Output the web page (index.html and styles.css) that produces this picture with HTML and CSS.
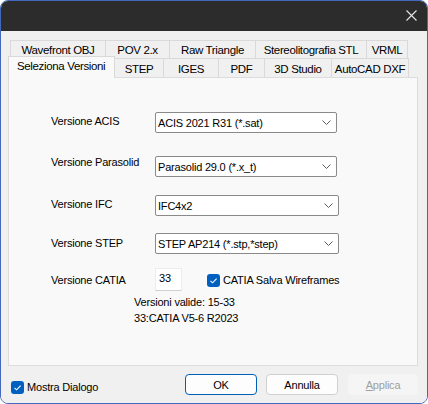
FILE: index.html
```html
<!DOCTYPE html>
<html>
<head>
<meta charset="utf-8">
<link rel="stylesheet" href="styles.css">
</head>
<body>
<div class="window">
  <div class="titlebar">
    <svg class="close" width="11" height="11" viewBox="0 0 11 11"><path d="M0.5 0.5 L10.5 10.5 M10.5 0.5 L0.5 10.5" stroke="#e6e6e6" stroke-width="1.1" fill="none"/></svg>
  </div>
  <div class="body">
    <div class="tabs">
      <div class="tabrow back">
        <div class="tab w95">Wavefront OBJ</div>
        <div class="tab w65">POV 2.x</div>
        <div class="tab w87">Raw Triangle</div>
        <div class="tab w112">Stereolitografia STL</div>
        <div class="tab w42">VRML</div>
      </div>
      <div class="tabrow front">
        <div class="tab sel">Seleziona Versioni</div>
        <div class="tab w50">STEP</div>
        <div class="tab w56">IGES</div>
        <div class="tab w47">PDF</div>
        <div class="tab w68">3D Studio</div>
        <div class="tab w78">AutoCAD DXF</div>
      </div>
    </div>
    <div class="panel">
      <div class="row r1">
        <div class="label l1">Versione ACIS</div>
        <div class="combo">
          <span>ACIS 2021 R31 (*.sat)</span>
          <svg width="9" height="5" viewBox="0 0 9 5"><polyline points="0.5,0.5 4.5,4.5 8.5,0.5" fill="none" stroke="#5c5c5c" stroke-width="1"/></svg>
        </div>
      </div>
      <div class="row r2">
        <div class="label l2">Versione Parasolid</div>
        <div class="combo">
          <span>Parasolid 29.0 (*.x_t)</span>
          <svg width="9" height="5" viewBox="0 0 9 5"><polyline points="0.5,0.5 4.5,4.5 8.5,0.5" fill="none" stroke="#5c5c5c" stroke-width="1"/></svg>
        </div>
      </div>
      <div class="row r3">
        <div class="label l3">Versione IFC</div>
        <div class="combo wide">
          <span>IFC4x2</span>
          <svg width="9" height="5" viewBox="0 0 9 5"><polyline points="0.5,0.5 4.5,4.5 8.5,0.5" fill="none" stroke="#5c5c5c" stroke-width="1"/></svg>
        </div>
      </div>
      <div class="row r4">
        <div class="label l4">Versione STEP</div>
        <div class="combo wide">
          <span>STEP AP214 (*.stp,*step)</span>
          <svg width="9" height="5" viewBox="0 0 9 5"><polyline points="0.5,0.5 4.5,4.5 8.5,0.5" fill="none" stroke="#5c5c5c" stroke-width="1"/></svg>
        </div>
      </div>
      <div class="row r5">
        <div class="label l5">Versione CATIA</div>
        <div class="edit">33</div>
        <div class="check catia">
          <span class="box"><svg width="13" height="13" viewBox="0 0 13 13"><polyline points="3.5,6.8 5.6,8.8 9.6,4.6" fill="none" stroke="#ffffff" stroke-width="1.1"/></svg></span>
          <span class="cktext">CATIA Salva Wireframes</span>
        </div>
      </div>
      <div class="info">
        <div>Versioni valide: 15-33</div>
        <div>33:CATIA V5-6 R2023</div>
      </div>
    </div>
    <div class="footer">
      <div class="check mostra">
        <span class="box"><svg width="13" height="13" viewBox="0 0 13 13"><polyline points="3.5,6.8 5.6,8.8 9.6,4.6" fill="none" stroke="#ffffff" stroke-width="1.1"/></svg></span>
        <span class="cktext">Mostra Dialogo</span>
      </div>
      <div class="buttons">
        <div class="btn ok">OK</div>
        <div class="btn">Annulla</div>
        <div class="btn disabled"><u>A</u>pplica</div>
      </div>
    </div>
  </div>
</div>
</body>
</html>
```
FILE: styles.css
```css
* { box-sizing: border-box; }
html, body { margin: 0; padding: 0; }
body {
  width: 428px;
  height: 404px;
  overflow: hidden;
  background: #ffffff;
  font-family: "Liberation Sans", Arial, sans-serif;
  font-size: 11px;
  letter-spacing: -0.2px;
  color: #000000;
}
.window {
  width: 428px;
  height: 404px;
  border: 1px solid #4468bd;
  border-radius: 8px;
  overflow: hidden;
  display: flex;
  flex-direction: column;
  background: #f0f0f0;
}
.titlebar {
  height: 30px;
  background: #2c2c2c;
  display: flex;
  justify-content: flex-end;
  align-items: flex-start;
  padding: 9px 10px 0 0;
  flex: none;
}
.close { display: block; }
.body {
  flex: 1;
  display: flex;
  flex-direction: column;
  background: #f0f0f0;
}
.tabs {
  margin-top: 9px;
  display: flex;
  flex-direction: column;
  font-size: 11.5px;
  letter-spacing: -0.35px;
}
.tabrow { display: flex; }
.tabrow.back { padding-left: 9px; height: 18px; }
.tabrow.front { padding-left: 7px; height: 19px; align-items: flex-end; }
.tab {
  height: 100%;
  border: 1px solid #d9d9d9;
  border-bottom: none;
  margin-right: -1px;
  display: flex;
  align-items: center;
  justify-content: center;
  background: #f0f0f0;
  white-space: nowrap;
  padding-top: 1px;
}
.w95 { width: 96px; }
.w65 { width: 65px; }
.w87 { width: 87px; }
.w112 { width: 112px; }
.w42 { width: 42px; }
.w50 { width: 50px; }
.w56 { width: 56px; }
.w47 { width: 47px; }
.w68 { width: 68px; }
.w78 { width: 78px; }
.tab.sel {
  width: 107px;
  height: 22px;
  margin-bottom: -1px;
  background: #f9f9f9;
  position: relative;
  z-index: 2;
  justify-content: flex-start;
  align-items: flex-start;
  padding: 3px 0 0 8px;
}
.panel {
  margin: 0 9px 0 7px;
  height: 289px;
  background: #f9f9f9;
  border: 1px solid #dcdcdc;
  padding: 34px 0 0 42px;
  display: flex;
  flex-direction: column;
}
.row { display: flex; align-items: flex-start; }
.r2 { margin-top: 23px; }
.r3 { margin-top: 18px; }
.r4 { margin-top: 17px; }
.r5 { margin-top: 14px; }
.label {
  width: 104px;
  line-height: 13px;
  white-space: nowrap;
}
.l1 { padding-top: 3px; }
.l2 { padding-top: 0px; }
.l3 { padding-top: 3px; }
.l4 { padding-top: 4px; }
.l5 { padding-top: 6px; }
.combo {
  width: 182px;
  height: 21px;
  background: #ffffff;
  border: 1px solid #8a8a8a;
  border-radius: 2px;
  display: flex;
  align-items: center;
  justify-content: space-between;
  padding: 0 5px 0 2px;
  white-space: nowrap;
}
.combo.wide { width: 184px; }
.combo svg { display: block; }
.edit {
  width: 27px;
  height: 23px;
  background: #ffffff;
  border: 1px solid #ececec;
  border-bottom-color: #d0d0d0;
  padding: 3px 0 0 3px;
  line-height: 13px;
}
.check { display: flex; align-items: center; }
.check .box {
  width: 13px;
  height: 13px;
  border-radius: 3px;
  background: #0060c0;
  display: block;
  flex: none;
}
.check .box svg { display: block; }
.cktext { margin-left: 3px; white-space: nowrap; line-height: 13px; }
.catia { margin-left: 25px; margin-top: 6px; }
.info {
  margin-left: 83px;
  margin-top: 3px;
  line-height: 16px;
}
.footer {
  flex: 1;
  display: flex;
  justify-content: space-between;
  align-items: flex-start;
  padding: 0 9px 0 10px;
}
.mostra { margin-top: 15px; }
.buttons {
  display: flex;
  margin-top: 8px;
}
.btn {
  width: 72px;
  height: 21px;
  border: 1px solid #d0d0d0;
  border-radius: 4px;
  background: #fdfdfd;
  display: flex;
  align-items: center;
  justify-content: center;
  margin-left: 9px;
}
.btn.ok { border-color: #005fb8; margin-left: 0; }
.btn.disabled {
  width: 70px;
  margin-left: 10px;
  border-color: #f5f5f5;
  background: #f5f5f5;
  color: #a0a0a0;
}
.btn u { text-decoration: underline; }
```
